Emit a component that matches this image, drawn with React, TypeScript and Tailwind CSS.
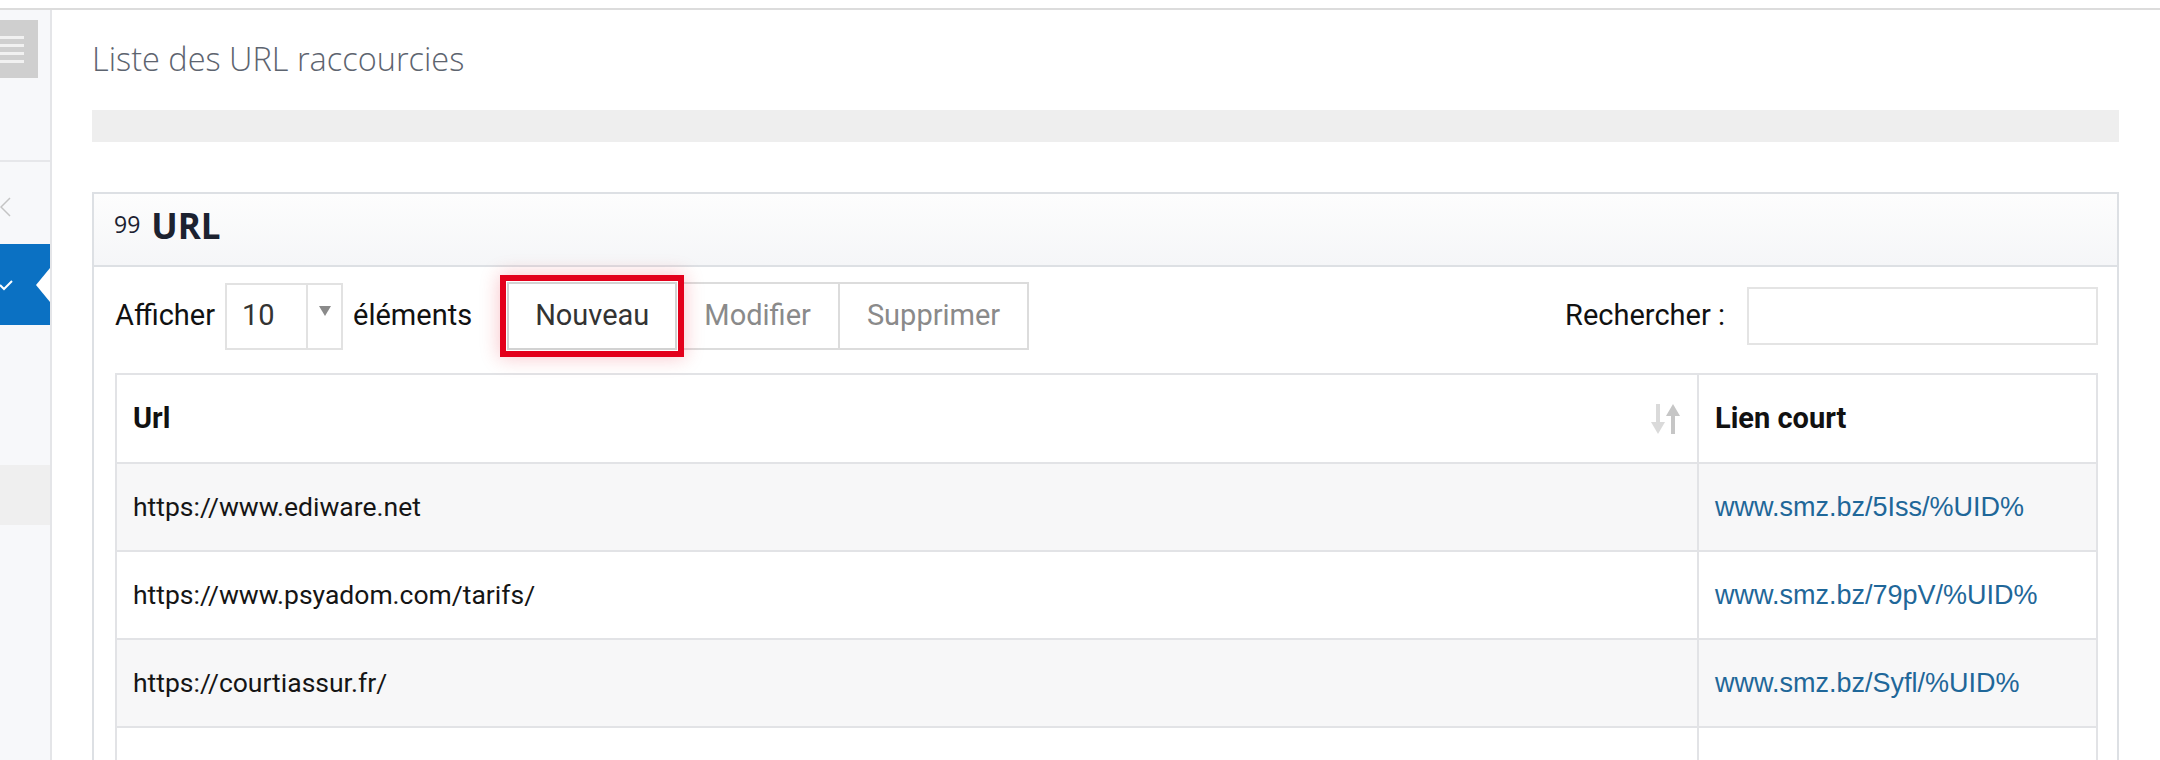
import React from "react";

type Row = { url: string; short: string };

const rows: Row[] = [
  { url: "https://www.ediware.net", short: "www.smz.bz/5Iss/%UID%" },
  { url: "https://www.psyadom.com/tarifs/", short: "www.smz.bz/79pV/%UID%" },
  { url: "https://courtiassur.fr/", short: "www.smz.bz/Syfl/%UID%" },
  { url: "", short: "" },
];

const SortIcon = () => (
  <svg width="30" height="30" viewBox="0 0 30 30" className="shrink-0">
    <rect x="5" y="0" width="4" height="20" fill="#dadada" />
    <polygon points="0,18 14,18 7,30" fill="#dadada" />
    <rect x="20" y="10" width="4" height="20" fill="#c6c6c6" />
    <polygon points="15,12 29,12 22,0" fill="#c6c6c6" />
  </svg>
);

const Sidebar = () => (
  <aside className="flex w-[52px] shrink-0 flex-col border-r-2 border-[#e4e5e8] bg-[#f7f8fa]">
    <div className="mt-[10px] flex h-[58px] w-[38px] flex-col justify-center gap-[5px] bg-[#cfcfcf]">
      {[0, 1, 2, 3].map((i) => (
        <span key={i} className="block h-[3px] w-[24px] bg-[#f1f1f1]" />
      ))}
    </div>
    <div className="mt-[82px] border-t-2 border-[#e6e7ea]" />
    <svg width="12" height="20" viewBox="0 0 12 20" className="mt-[35px]">
      <polyline points="10,1 1,10 10,19" fill="none" stroke="#c4c4c4" strokeWidth="1.5" />
    </svg>
    <div className="relative mt-[27px] flex h-[81px] items-center bg-[#0b71c3]">
      <svg width="14" height="12" viewBox="0 0 14 12">
        <polyline points="0,6 4,10 12,2" fill="none" stroke="#ffffff" strokeWidth="2" />
      </svg>
      <svg width="14" height="34" viewBox="0 0 14 34" className="absolute right-0 top-[24px]">
        <polygon points="14,0 0,17 14,34" fill="#ffffff" />
      </svg>
    </div>
    <div className="mt-[140px] h-[60px] bg-[#efefef]" />
  </aside>
);

const Toolbar = () => (
  <div className="mt-[7px] flex h-[84px] items-center justify-between text-[29px] text-[#111]">
    <div className="flex items-center">
      <span>Afficher</span>
      <div className="ml-[10px] flex h-[67px] w-[118px] border-2 border-[#e2e2e2] bg-white">
        <span className="flex w-[79px] items-center pl-[15px] text-[#333]">10</span>
        <span className="flex flex-1 justify-center border-l-2 border-[#e2e2e2] pt-[21px]">
          <svg width="12" height="10" viewBox="0 0 12 10">
            <polygon points="0,0 12,0 6,10" fill="#8a8a8a" />
          </svg>
        </span>
      </div>
      <span className="ml-[10px]">éléments</span>
      <div className="ml-[35px] flex">
        <button className="relative z-10 h-[68px] border-2 border-[#d2d2d2] bg-white px-[26px] text-[#333] shadow-[0_0_0_1px_#ffffff,0_0_0_7px_#e3001b,0_0_18px_8px_rgba(227,0,27,0.22)]">
          Nouveau
        </button>
        <button className="-ml-[2px] h-[68px] border-2 border-[#dcdcdc] bg-white px-[27px] text-[#8a8a8a]">
          Modifier
        </button>
        <button className="-ml-[2px] h-[68px] border-2 border-[#dcdcdc] bg-white px-[27px] text-[#8a8a8a]">
          Supprimer
        </button>
      </div>
    </div>
    <div className="flex items-center gap-[22px]">
      <span>Rechercher&nbsp;:</span>
      <div className="h-[58px] w-[351px] border-2 border-[#e4e4e4] bg-white" />
    </div>
  </div>
);

const UrlTable = () => (
  <table className="mt-[15px] w-full table-fixed border-collapse border-2 border-[#e2e3e6] text-[26.5px] text-[#151515]">
    <colgroup>
      <col />
      <col className="w-[399px]" />
    </colgroup>
    <thead>
      <tr className="bg-white">
        <th className="h-[89px] border-2 border-[#e2e3e6] px-[16px] text-left text-[29px] font-bold text-[#111]">
          <div className="flex items-center justify-between">
            <span>Url</span>
            <SortIcon />
          </div>
        </th>
        <th className="h-[89px] border-2 border-[#e2e3e6] px-[16px] text-left text-[29px] font-bold text-[#111]">
          Lien court
        </th>
      </tr>
    </thead>
    <tbody>
      {rows.map((r, i) => (
        <tr key={i} className={i % 2 === 0 ? "bg-[#f7f7f8]" : "bg-white"}>
          <td className="h-[88px] border-2 border-[#e2e3e6] px-[16px]">{r.url}</td>
          <td className="h-[88px] border-2 border-[#e2e3e6] px-[16px] font-['Liberation_Sans',Arial,sans-serif] text-[27px] text-[#1f6799]">
            {r.short}
          </td>
        </tr>
      ))}
    </tbody>
  </table>
);

export default function App() {
  return (
    <div className="h-[760px] w-full overflow-hidden bg-white pt-[8px] font-[Roboto,sans-serif]">
      <div className="flex h-full border-t-2 border-[#dcdcdc]">
        <Sidebar />
        <main className="min-w-0 flex-1 pl-[40px] pr-[41px]">
          <h1 className="mt-[29px] font-['Open_Sans',sans-serif] text-[32.5px] font-light leading-[40px] text-[#5d646f]">
            Liste des URL raccourcies
          </h1>
          <div className="mt-[31px] h-[32px] bg-[#eeeeee]" />
          <section className="mt-[50px] border-2 border-[#dde0e4] bg-white">
            <div className="flex h-[73px] items-start border-b-2 border-[#dde0e4] bg-linear-to-b from-[#fdfdfd] to-[#f5f6f8] pl-[20px] font-['Open_Sans',sans-serif] text-[#1c2230]">
              <span className="mt-[17px] text-[23px] leading-[26px]">99</span>
              <span className="ml-[11px] mt-[12px] text-[35px] font-bold leading-[40px]">URL</span>
            </div>
            <div className="pl-[21px] pr-[19px]">
              <Toolbar />
              <UrlTable />
            </div>
          </section>
        </main>
      </div>
    </div>
  );
}
